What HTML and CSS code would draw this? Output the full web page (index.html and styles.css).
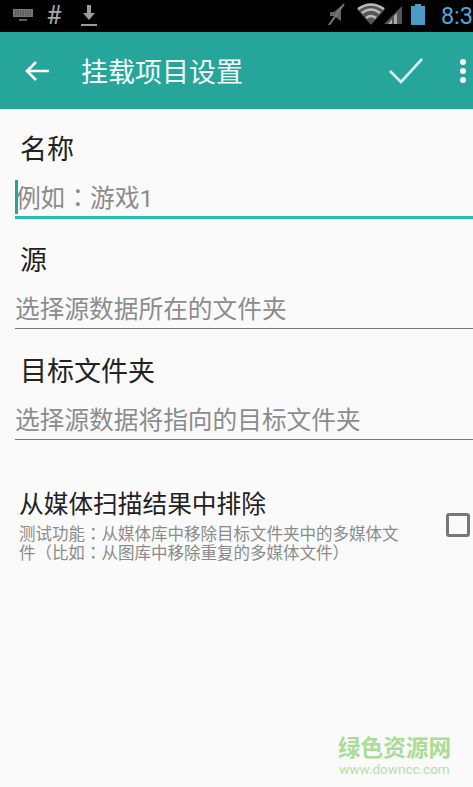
FILE: index.html
```html
<!DOCTYPE html>
<html lang="zh-CN">
<head>
    <meta charset="UTF-8">
    <meta name="viewport" content="width=device-width, initial-scale=1.0">
    <title>挂载项目设置</title>
    <link rel="stylesheet" href="styles.css">
</head>
<body>

<div class="status-bar">
    <svg class="status-icon keyboard" width="22" height="14" viewBox="0 0 22 14">
        <path d="M1 0h20v8H1z" fill="#777"/>
        <path d="M3 2h16M3 4h16M3 6h16" stroke="#333" stroke-width="0.8" stroke-dasharray="1.5 1"/>
        <path d="M7 11h8" stroke="#777" stroke-width="1.5"/>
    </svg>
    <span class="status-hash">#</span>
    <svg class="status-icon download" width="18" height="22" viewBox="0 0 18 22">
        <path d="M7 0h4v8h4l-6 7-6-7h4z" fill="#9a9a9a"/>
        <path d="M1 20h16" stroke="#9a9a9a" stroke-width="2"/>
    </svg>
    <div class="status-right">
        <svg width="20" height="22" viewBox="0 0 20 22">
            <path d="M3 9h4l7-6v15l-7-5H3z" fill="#666"/>
            <path d="M2 22L17 1" stroke="#777" stroke-width="2"/>
        </svg>
        <svg class="wifi" width="28" height="22" viewBox="0 0 28 22">
            <path d="M0 6Q14-4 28 6L14 22z" fill="#555"/>
            <path d="M1 6Q14-3 27 6M5 10Q14 3 23 10M9 15Q14 11 19 15" stroke="#bbb" stroke-width="2.4" fill="none"/>
        </svg>
        <svg class="signal" width="20" height="22" viewBox="0 0 20 22">
            <path d="M0 21L18 3v18z" fill="#555"/>
            <path d="M4 21l4-5v5zM10 21v-8l3-3v11z" fill="#aaa"/>
        </svg>
        <svg class="battery" width="16" height="21" viewBox="0 0 16 21">
            <path d="M5 0h6v2h4v19H1V2h4z" fill="#4a9cc7"/>
        </svg>
        <span class="status-time">8:3</span>
    </div>
</div>

<header class="app-bar">
    <svg class="back-icon" width="26" height="22" viewBox="0 0 26 22">
        <path d="M25 11H3M12 2l-9 9 9 9" stroke="#fff" stroke-width="2.6" fill="none"/>
    </svg>
    <h1 class="app-title">挂载项目设置</h1>
    <svg class="check-icon" width="34" height="26" viewBox="0 0 34 26">
        <path d="M1 13l11 11L33 1" stroke="#d4f0ec" stroke-width="2.6" fill="none"/>
    </svg>
    <div class="more-icon"><i></i><i></i><i></i></div>
</header>

<main class="form">
    <div class="field">
        <label class="field-label">名称</label>
        <div class="field-input active" lang="zh-TW">例如：游戏1</div>
    </div>
    <div class="field">
        <label class="field-label">源</label>
        <div class="field-input">选择源数据所在的文件夹</div>
    </div>
    <div class="field">
        <label class="field-label">目标文件夹</label>
        <div class="field-input">选择源数据将指向的目标文件夹</div>
    </div>

    <div class="option">
        <div class="option-text">
            <div class="option-title">从媒体扫描结果中排除</div>
            <div class="option-desc" lang="zh-TW">测试功能：从媒体库中移除目标文件夹中的多媒体文件（比如：从图库中移除重复的多媒体文件）</div>
        </div>
        <span class="checkbox"></span>
    </div>
</main>

<div class="watermark">
    <div class="watermark-name">绿色资源网</div>
    <div class="watermark-url">www.downcc.com</div>
</div>

</body>
</html>
```

FILE: styles.css
```css
html, body {
    margin: 0;
    padding: 0;
}
body {
    position: relative;
    width: 473px;
    height: 787px;
    overflow: hidden;
    font-family: Roboto, "Noto Sans CJK SC", sans-serif;
    background-color: #fafafa;
}
.status-bar {
    display: flex;
    align-items: center;
    height: 32px;
    padding-left: 12px;
    background-color: #000;
    box-sizing: border-box;
    overflow: hidden;
}
.status-icon.keyboard {
    margin-right: 11px;
}
.status-hash {
    width: 18px;
    margin-right: 17px;
    color: #aaa;
    font-size: 25px;
    line-height: 32px;
    text-align: center;
}
.status-right {
    display: flex;
    align-items: center;
    margin-left: auto;
    gap: 2px;
    white-space: nowrap;
}
.status-right svg {
    margin-bottom: 4px;
}
.wifi {
    margin-left: 8px;
}
.signal {
    margin-left: -3px;
}
.battery {
    margin-left: 4px;
}
.status-time {
    margin-left: 13px;
    color: #4fa8d8;
    font-size: 23.5px;
    line-height: 32px;
}
.app-bar {
    display: flex;
    align-items: center;
    height: 77px;
    background-color: #26a69a;
    padding-left: 24px;
    box-sizing: border-box;
}
.back-icon {
    flex: none;
}
.app-title {
    margin: 0 0 0 31px;
    color: #f4fbfa;
    font-size: 27px;
    font-weight: 400;
}
.check-icon {
    flex: none;
    margin-left: auto;
}
.more-icon {
    display: flex;
    flex-direction: column;
    gap: 3px;
    margin: 0 7px 0 37px;
}
.more-icon i {
    display: block;
    width: 6px;
    height: 6px;
    border-radius: 50%;
    background-color: #fff;
}
.form {
    padding-top: 21px;
    padding-left: 15px;
}
.field {
    height: 111px;
}
.field-label {
    display: block;
    height: 40px;
    padding-left: 5px;
    color: #222;
    font-size: 27px;
    line-height: 40px;
}
.field-input {
    height: 48px;
    border-bottom: 1px solid #777;
    box-sizing: border-box;
    color: #8c8c8c;
    font-size: 24.7px;
    line-height: 58px;
    white-space: nowrap;
}
.field-input.active {
    height: 49px;
    border-bottom: 3px solid #26bfae;
    position: relative;
    padding-left: 1px;
    font-family: Roboto, "Noto Sans CJK TC", sans-serif;
    line-height: 58px;
    text-spacing-trim: space-all;
}
.field-input.active::before {
    content: "";
    position: absolute;
    left: 0;
    top: 10px;
    width: 3px;
    height: 34px;
    background-color: #26a69a;
}
.option {
    display: flex;
    align-items: center;
    padding-top: 23px;
    padding-left: 4px;
}
.option-text {
    width: 382px;
}
.option-title {
    color: #222;
    font-size: 24.7px;
    line-height: 38px;
}
.option-desc {
    margin-top: 1px;
    color: #8a8a8a;
    font-family: Roboto, "Noto Sans CJK TC", sans-serif;
    font-size: 16.5px;
    line-height: 19px;
    text-spacing-trim: space-all;
}
.checkbox {
    flex: none;
    width: 18px;
    height: 18px;
    margin-left: 45px;
    border: 3px solid #777;
    border-radius: 3px;
}
.watermark {
    position: absolute;
    right: 22px;
    top: 735px;
    width: 113px;
    text-align: center;
}
.watermark-name {
    color: #a9dc97;
    font-size: 22.6px;
    font-weight: 700;
    line-height: 27px;
    white-space: nowrap;
}
.watermark-url {
    color: #b4dfa6;
    font-size: 13.5px;
    line-height: 15px;
    white-space: nowrap;
}
```
